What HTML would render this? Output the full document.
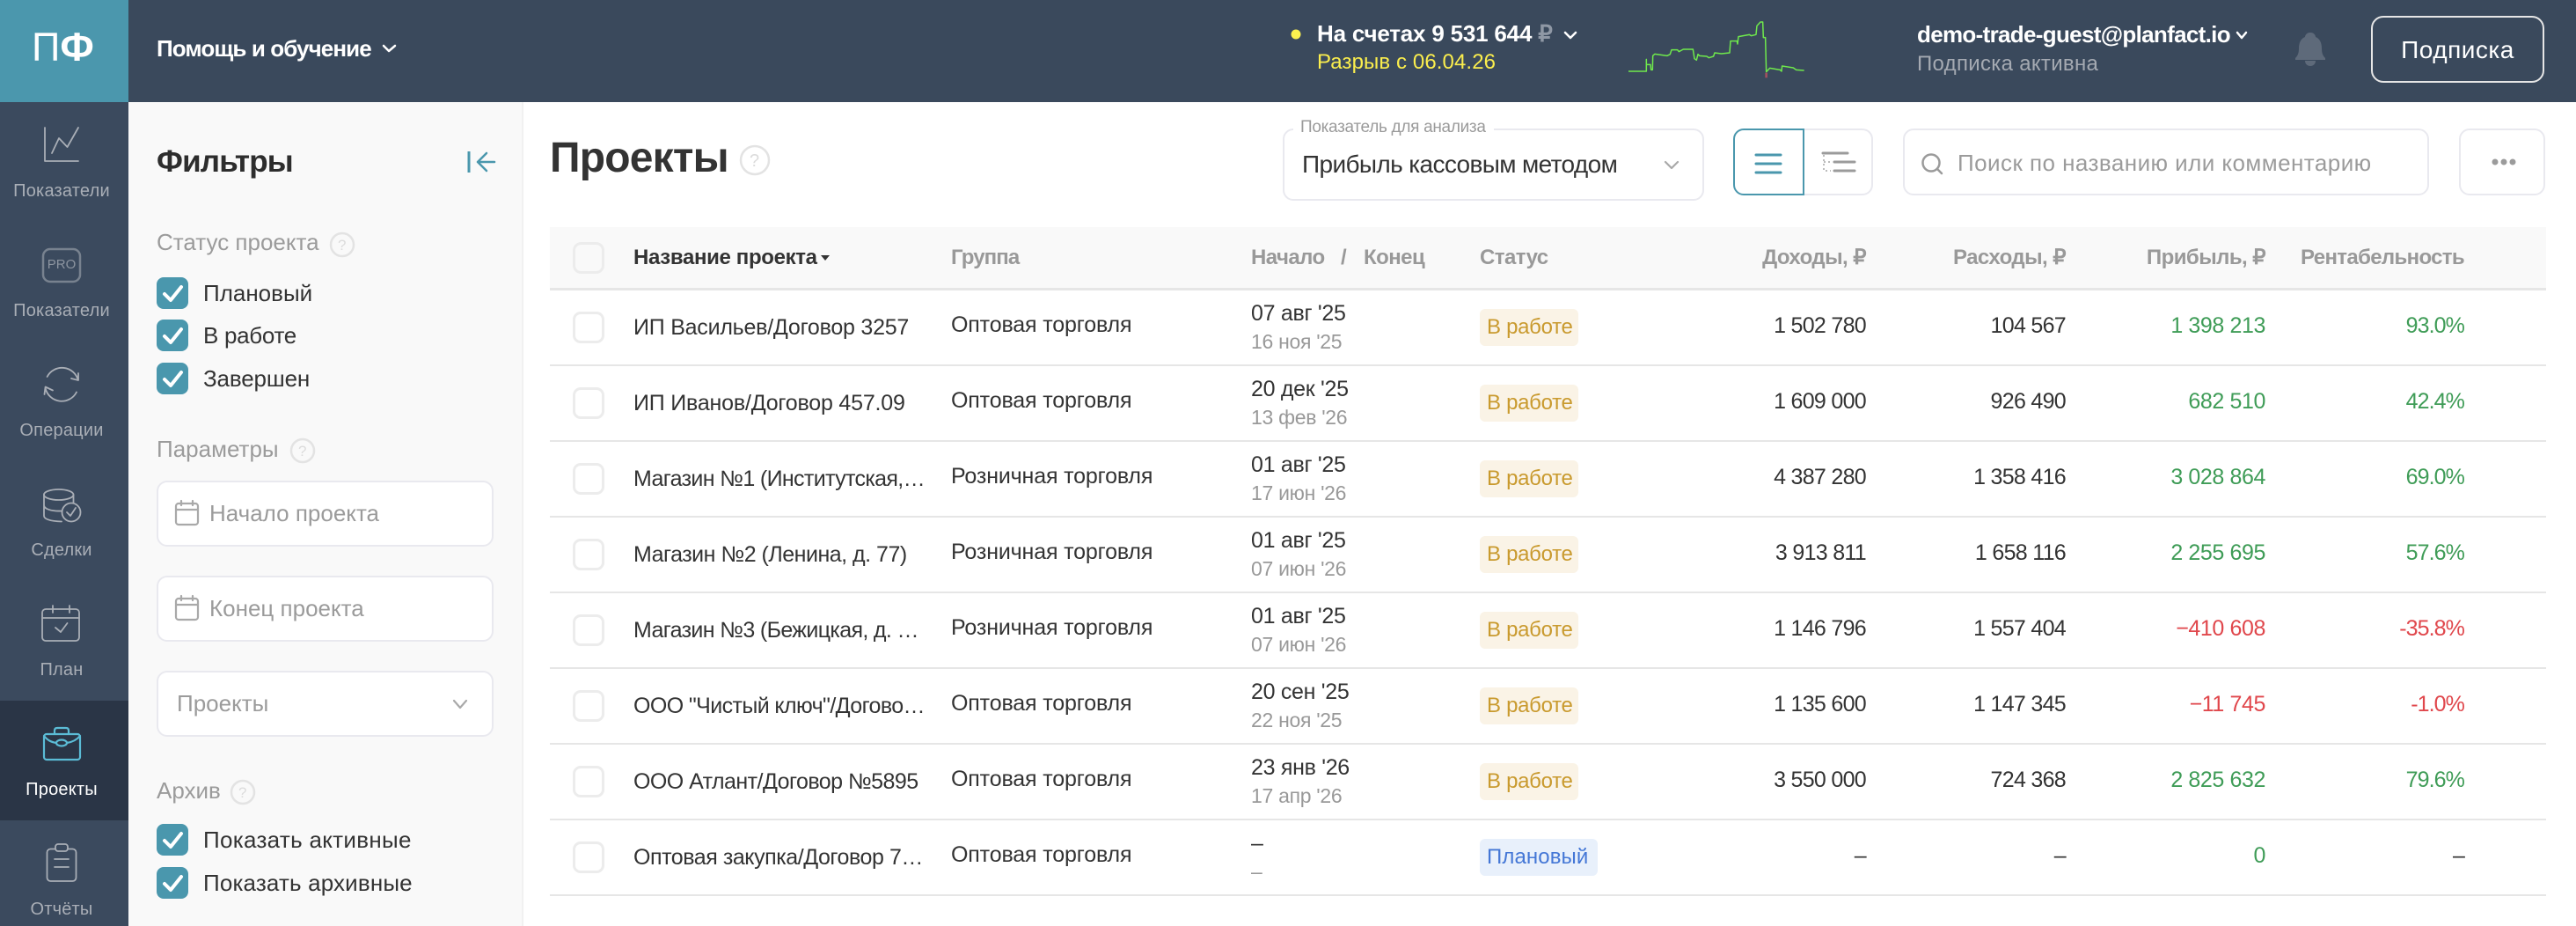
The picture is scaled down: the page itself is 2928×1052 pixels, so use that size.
<!DOCTYPE html>
<html lang="ru"><head><meta charset="utf-8"><title>Проекты</title>
<style>
html,body{margin:0;padding:0;background:#fff}
body{position:relative;width:2928px;height:1052px;overflow:hidden;font-family:"Liberation Sans",sans-serif;color:#333}
div,span.b{position:absolute;box-sizing:border-box}
.t{position:absolute;line-height:0;white-space:nowrap;font-size:25px}
svg{position:absolute;left:0;top:0}
.side{left:0;width:140px;text-align:center;font-size:20px;color:#a9aeb6;letter-spacing:.2px}
.f{left:178px;font-size:26px;color:#9b9b9b}
.c{left:231px;font-size:26px;color:#333}
.box{background:#fff;border:2px solid #e9e9ef;border-radius:12px}
.row{left:625px;width:2269px;height:86px;border-bottom:2px solid #e6e6e6}
.row .t{font-size:25px}
.ck{left:26px;top:24px;width:36px;height:36px;border:3px solid #ececec;border-radius:9px;background:#fff}
.n{left:95px;top:42px;letter-spacing:-.4px}.g{left:456px;top:39px;letter-spacing:-.15px}.d{left:797px;top:26px;letter-spacing:-.3px}.row .s{left:797px;top:58px;color:#999;font-size:23px;letter-spacing:-.3px}
.badge{left:1057px;top:21px;height:42px;width:112px;border-radius:6px;background:#faf3e6;color:#c99a2e;font-size:24px;line-height:42px;padding-left:8px;white-space:nowrap;letter-spacing:-.3px}
.v1,.v2,.v3,.v4{top:40px}
.v1{right:773px;letter-spacing:-.7px}.v2{right:546px;letter-spacing:-.7px}.v3{right:319px;letter-spacing:-.4px}.v4{right:93px;letter-spacing:-.9px}
.gr{color:#3f9c57}.rd{color:#e0474c}
.h{font-weight:bold;font-size:24px;color:#999;top:293px;letter-spacing:-.55px}
</style></head><body>
<div style="left:0;top:0;width:2928px;height:116px;background:#3a495c"></div>
<div style="left:0;top:0;width:146px;height:116px;background:#4b97ad"></div>
<div style="left:0;top:116px;width:146px;height:936px;background:#3b4a5e"></div>
<div style="left:0;top:796px;width:146px;height:136px;background:#2a3546"></div>
<div style="left:146px;top:116px;width:449px;height:936px;background:#f9f9f9;border-right:2px solid #f1f1f1"></div>
<div style="left:625px;top:258px;width:2269px;height:72px;background:#f9f9f9;border-bottom:3px solid #e6e6e6"></div>

<div class="box" style="left:178px;top:546px;width:383px;height:75px"></div>
<div class="box" style="left:178px;top:654px;width:383px;height:75px"></div>
<div class="box" style="left:178px;top:762px;width:383px;height:75px"></div>
<div class="box" style="left:1458px;top:146px;width:479px;height:82px"></div>
<div style="left:1470px;top:140px;width:228px;height:12px;background:#fff"></div>
<div class="box" style="left:2050px;top:146px;width:79px;height:76px;border-radius:0 12px 12px 0;border-left:0"></div>
<div style="left:1970px;top:146px;width:81px;height:76px;border:2px solid #4a97ad;border-radius:12px 0 0 12px;background:#fff"></div>
<div class="box" style="left:2163px;top:146px;width:598px;height:76px"></div>
<div class="box" style="left:2795px;top:146px;width:98px;height:76px"></div>
<div style="left:2695px;top:18px;width:197px;height:76px;border:2px solid #e6e6e6;border-radius:14px"></div>

<svg width="2928" height="1052" viewBox="0 0 2928 1052" fill="none">
<g stroke="#a9aeb6" stroke-width="1.800" stroke-linecap="round" stroke-linejoin="round">
<path d="M51 145V183H89"/><path d="M59 174L67 157L76.5 167L89 145"/>
<rect x="49" y="283" width="42" height="37" rx="8" stroke="#78828f" stroke-width="2.500"/>
<path d="M53.6 428A19 19 0 0 1 88.8 432M89 424V432L81 430"/>
<path d="M87 445.5A19 19 0 0 1 51.6 441M50.5 448L51.6 439.5L60 443.5"/>
<path d="M50 562V586C50 590 58 592 70 592.500M50 574C50 578 58 581 70 580.500M83.500 562V571"/>
<ellipse cx="66.700" cy="562" rx="16.800" ry="6"/>
<circle cx="81" cy="582" r="10.500"/><path d="M76 582L80 586L86 577"/>
<rect x="48" y="692" width="42" height="36" rx="4"/><path d="M48 702H90M60 688V696M79 688V696M63 713L69 718L76.500 708"/>
<rect x="53.500" y="964.500" width="33" height="36.500" rx="4"/><rect x="63" y="959" width="14" height="8" rx="3" fill="#3b4a5e"/><path d="M62 976H78M62 985H78"/>
</g>
<g stroke="#5bbcd6" stroke-width="2.200" stroke-linecap="round" stroke-linejoin="round">
<rect x="50" y="834" width="41" height="29" rx="3"/><path d="M62 834V830C62 828 63 827 65 827H75C77 827 78 828 78 830V834"/>
<path d="M50 836C54 841 58 843 64 844M76 844C82 843 87 841 91 836"/><ellipse cx="70" cy="844" rx="6" ry="3.500"/>
</g>
<path d="M533 172V196" stroke="#4a97ad" stroke-width="3"/><path d="M543 184H562M553 174L543 184L553 194" stroke="#4a97ad" stroke-width="2.500" stroke-linecap="round" stroke-linejoin="round"/>
<g stroke="#fff" stroke-width="2.500" stroke-linecap="round" stroke-linejoin="round">
<path d="M436 52L442 58L449 52"/><path d="M1779 37L1785 43L1791 37"/><path d="M2543 37L2548 43L2553 37"/>
</g>
<g stroke="#a9a9a9" stroke-width="2.200" stroke-linecap="round" stroke-linejoin="round">
<path d="M516 796L523 804L530 796"/><path d="M1893 184L1900 191L1907 184"/>
<rect x="200" y="572" width="25" height="24" rx="3"/><path d="M200 579H225M206 569V574M219 569V574"/>
<rect x="200" y="680" width="25" height="24" rx="3"/><path d="M200 687H225M206 677V682M219 677V682"/>
</g>
<g fill="#4a97ad">
<rect x="178" y="315" width="36" height="36" rx="8"/><rect x="178" y="363" width="36" height="36" rx="8"/><rect x="178" y="412" width="36" height="36" rx="8"/><rect x="178" y="936" width="36" height="36" rx="8"/><rect x="178" y="985" width="36" height="36" rx="8"/>
</g>
<g stroke="#fff" stroke-width="4" stroke-linecap="round" stroke-linejoin="round">
<path d="M187 334L194 341L206 326"/><path d="M187 382L194 389L206 374"/><path d="M187 431L194 438L206 423"/><path d="M187 955L194 962L206 947"/><path d="M187 1004L194 1011L206 996"/>
</g>
<g stroke="#e3e3e3" stroke-width="2.500">
<circle cx="389" cy="278" r="13"/><circle cx="344" cy="512" r="13"/><circle cx="276" cy="900" r="13"/><circle cx="858" cy="182" r="16"/>
</g>
<path d="M2626 37C2621 37 2620 41 2620 42C2615 44 2613 49 2613 55C2613 60 2612 63 2609 66V68H2643V66C2640 63 2639 60 2639 55C2639 49 2637 44 2632 42C2632 41 2631 37 2626 37Z" fill="#5e6a7a"/>
<path d="M2620 69H2632C2632 73 2629 75 2626 75C2623 75 2620 73 2620 69Z" fill="#5e6a7a"/>
<circle cx="1473" cy="39" r="5.500" fill="#fbf14f"/>
<g transform="translate(1780 0) scale(.3333)">
<path d="M683 248V265" stroke="#a05060" stroke-width="8"/>
<path d="M213 243H274V202V220H288L290 238H295L296 190L303 184L345 190L355 185L360 170H380L385 176L400 168H433L438 200L445 205L450 185L455 190L480 192L487 197L503 192L507 180L530 183L558 180L561 140H583L585 150L588 125L625 118L632 122L648 118L651 88L663 75H671L673 128H680L683 245L695 232L730 238L735 243L737 225L775 231L785 238L812 240" stroke="#6fe94c" stroke-width="4.500" stroke-linejoin="round"/>
</g>
<path d="M1996 176H2024M1996 186H2024M1996 196H2024" stroke="#4a97ad" stroke-width="3" stroke-linecap="round"/>
<path d="M2072 174H2100M2085 184H2108M2085 194H2108" stroke="#9b9b9b" stroke-width="3" stroke-linecap="round"/>
<path d="M2073 176V194H2081M2073 184H2081" stroke="#a5a5a5" stroke-width="1.500" stroke-dasharray="2 3"/>
<circle cx="2195" cy="185" r="9.500" stroke="#9b9b9b" stroke-width="2.500"/><path d="M2202 192L2207 197" stroke="#9b9b9b" stroke-width="2.500" stroke-linecap="round"/>
<g fill="#9b9b9b"><circle cx="2836" cy="184" r="3.500"/><circle cx="2846" cy="184" r="3.500"/><circle cx="2856" cy="184" r="3.500"/></g>
<path d="M933 290H943L938 296Z" fill="#333"/>
<rect x="652.500" y="276.500" width="33" height="33" rx="8" stroke="#ececec" stroke-width="3" fill="#f9f9f9"/>
</svg>

<span class="t" style="left:36px;top:54px;font-size:45px;color:#fff"><span style="font-weight:normal">П</span><b>Ф</b></span>
<span class="t" style="left:178px;top:55px;font-size:26px;font-weight:bold;color:#fff;letter-spacing:-.9px">Помощь и обучение</span>
<span class="t side" style="top:217px">Показатели</span>
<span class="t" style="left:48px;width:44px;text-align:center;top:301px;font-size:15px;color:#8d95a0;letter-spacing:0">PRO</span>
<span class="t side" style="top:353px">Показатели</span>
<span class="t side" style="top:489px">Операции</span>
<span class="t side" style="top:625px">Сделки</span>
<span class="t side" style="top:761px">План</span>
<span class="t side" style="top:897px;color:#fff">Проекты</span>
<span class="t side" style="top:1033px">Отчёты</span>

<span class="t" style="left:178px;top:184px;font-size:35px;font-weight:bold;color:#2d2d2d;letter-spacing:-.8px">Фильтры</span>
<span class="t f" style="top:275px">Статус проекта</span>
<span class="t" style="left:384px;top:279px;font-size:17px;color:#dcdcdc">?</span>
<span class="t c" style="top:333px">Плановый</span>
<span class="t c" style="top:381px;letter-spacing:-.3px">В работе</span>
<span class="t c" style="top:430px;letter-spacing:-.15px">Завершен</span>
<span class="t f" style="top:510px">Параметры</span>
<span class="t" style="left:339px;top:513px;font-size:17px;color:#dcdcdc">?</span>
<span class="t" style="left:238px;top:583px;font-size:26px;color:#9b9b9b">Начало проекта</span>
<span class="t" style="left:238px;top:691px;font-size:26px;color:#9b9b9b">Конец проекта</span>
<span class="t" style="left:201px;top:799px;font-size:26px;color:#9b9b9b">Проекты</span>
<span class="t f" style="top:898px">Архив</span>
<span class="t" style="left:271px;top:901px;font-size:17px;color:#dcdcdc">?</span>
<span class="t c" style="top:954px;letter-spacing:.3px">Показать активные</span>
<span class="t c" style="top:1003px;letter-spacing:.15px">Показать архивные</span>

<span class="t" style="left:1497px;top:38px;font-size:26px;font-weight:bold;color:#fff;letter-spacing:-.2px">На счетах 9 531 644 <span style="color:#8f98a5">₽</span></span>
<span class="t" style="left:1497px;top:71px;font-size:24px;color:#fbee4d;letter-spacing:.1px">Разрыв с 06.04.26</span>
<span class="t" style="left:2179px;top:39px;font-size:26px;font-weight:bold;color:#fff;letter-spacing:-.68px">demo-trade-guest@planfact.io</span>
<span class="t" style="left:2179px;top:73px;font-size:24px;color:#a5aab2;letter-spacing:.3px">Подписка активна</span>
<span class="t" style="left:2695px;width:197px;text-align:center;top:57px;font-size:28px;color:#fff;letter-spacing:.5px">Подписка</span>

<span class="t" style="left:625px;top:180px;font-size:48px;font-weight:bold;color:#333;letter-spacing:-.8px">Проекты</span>
<span class="t" style="left:852px;top:183px;font-size:20px;color:#dcdcdc">?</span>
<span class="t" style="left:1478px;top:145px;font-size:19px;color:#9b9b9b;letter-spacing:-.3px">Показатель для анализа</span>
<span class="t" style="left:1480px;top:187px;font-size:28px;color:#333;letter-spacing:-.62px">Прибыль кассовым методом</span>
<span class="t" style="left:2225px;top:185px;font-size:26px;color:#9b9b9b;letter-spacing:.45px">Поиск по названию или комментарию</span>

<span class="t h" style="left:720px;color:#333;letter-spacing:-.35px">Название проекта</span>
<span class="t h" style="left:1081px;letter-spacing:-.9px">Группа</span>
<span class="t h" style="left:1422px">Начало</span>
<span class="t h" style="left:1524px">/</span>
<span class="t h" style="left:1550px">Конец</span>
<span class="t h" style="left:1682px">Статус</span>
<span class="t h" style="right:807px">Доходы, ₽</span>
<span class="t h" style="right:580px">Расходы, ₽</span>
<span class="t h" style="right:353px">Прибыль, ₽</span>
<span class="t h" style="right:127px;letter-spacing:-.66px">Рентабельность</span>

<div class="row" style="top:330px"><div class="ck"></div><span class="t n" style="letter-spacing:-.23px">ИП Васильев/Договор 3257</span><span class="t g">Оптовая торговля</span><span class="t d">07 авг '25</span><span class="t s">16 ноя '25</span><div class="badge">В работе</div><span class="t v1">1 502 780</span><span class="t v2">104 567</span><span class="t v3 gr">1 398 213</span><span class="t v4 gr">93.0%</span></div>
<div class="row" style="top:416px"><div class="ck"></div><span class="t n" style="letter-spacing:-.2px">ИП Иванов/Договор 457.09</span><span class="t g">Оптовая торговля</span><span class="t d">20 дек '25</span><span class="t s">13 фев '26</span><div class="badge">В работе</div><span class="t v1">1 609 000</span><span class="t v2">926 490</span><span class="t v3 gr">682 510</span><span class="t v4 gr">42.4%</span></div>
<div class="row" style="top:502px"><div class="ck"></div><span class="t n" style="letter-spacing:-.65px">Магазин №1 (Институтская,…</span><span class="t g">Розничная торговля</span><span class="t d">01 авг '25</span><span class="t s">17 июн '26</span><div class="badge">В работе</div><span class="t v1">4 387 280</span><span class="t v2">1 358 416</span><span class="t v3 gr">3 028 864</span><span class="t v4 gr">69.0%</span></div>
<div class="row" style="top:588px"><div class="ck"></div><span class="t n" style="letter-spacing:-.5px">Магазин №2 (Ленина, д. 77)</span><span class="t g">Розничная торговля</span><span class="t d">01 авг '25</span><span class="t s">07 июн '26</span><div class="badge">В работе</div><span class="t v1">3 913 811</span><span class="t v2">1 658 116</span><span class="t v3 gr">2 255 695</span><span class="t v4 gr">57.6%</span></div>
<div class="row" style="top:674px"><div class="ck"></div><span class="t n" style="letter-spacing:-.65px">Магазин №3 (Бежицкая, д. …</span><span class="t g">Розничная торговля</span><span class="t d">01 авг '25</span><span class="t s">07 июн '26</span><div class="badge">В работе</div><span class="t v1">1 146 796</span><span class="t v2">1 557 404</span><span class="t v3 rd">−410 608</span><span class="t v4 rd">-35.8%</span></div>
<div class="row" style="top:760px"><div class="ck"></div><span class="t n" style="letter-spacing:-.6px">ООО "Чистый ключ"/Догово…</span><span class="t g">Оптовая торговля</span><span class="t d">20 сен '25</span><span class="t s">22 ноя '25</span><div class="badge">В работе</div><span class="t v1">1 135 600</span><span class="t v2">1 147 345</span><span class="t v3 rd">−11 745</span><span class="t v4 rd">-1.0%</span></div>
<div class="row" style="top:846px"><div class="ck"></div><span class="t n" style="letter-spacing:-.55px">ООО Атлант/Договор №5895</span><span class="t g">Оптовая торговля</span><span class="t d">23 янв '26</span><span class="t s">17 апр '26</span><div class="badge">В работе</div><span class="t v1">3 550 000</span><span class="t v2">724 368</span><span class="t v3 gr">2 825 632</span><span class="t v4 gr">79.6%</span></div>
<div class="row" style="top:932px"><div class="ck"></div><span class="t n" style="letter-spacing:-.45px">Оптовая закупка/Договор 7…</span><span class="t g">Оптовая торговля</span><span class="t d">–</span><span class="t s">–</span><div class="badge" style="background:#e8f0fb;color:#4477d6;width:134px;letter-spacing:.1px">Плановый</div><span class="t v1">–</span><span class="t v2">–</span><span class="t v3 gr">0</span><span class="t v4">–</span></div>
</body></html>
